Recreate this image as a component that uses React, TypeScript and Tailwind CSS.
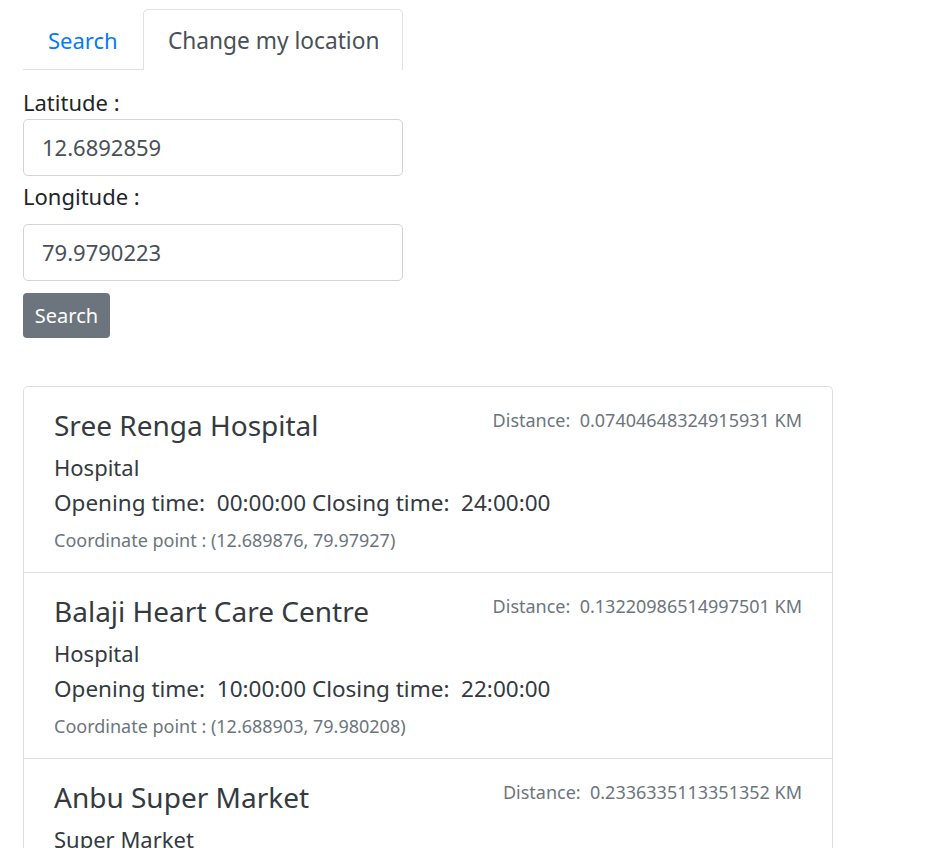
import React from "react";

const places = [
  {
    name: "Sree Renga Hospital",
    type: "Hospital",
    open: "00:00:00",
    close: "24:00:00",
    coord: "(12.689876, 79.97927)",
    dist: "0.07404648324915931",
  },
  {
    name: "Balaji Heart Care Centre",
    type: "Hospital",
    open: "10:00:00",
    close: "22:00:00",
    coord: "(12.688903, 79.980208)",
    dist: "0.13220986514997501",
  },
  {
    name: "Anbu Super Market",
    type: "Super Market",
    open: "08:00:00",
    close: "22:00:00",
    coord: "(12.687951, 79.980561)",
    dist: "0.2336335113351352",
  },
];

export default function App() {
  return (
    <div
      className="h-[848px] overflow-hidden bg-white pl-[23px] pt-[9px] text-[#212529]"
      style={{ fontFamily: '"Noto Sans", "Open Sans", sans-serif' }}
    >
      <div className="w-[380px]">
        <div className="flex h-[61px] items-stretch">
          <div className="flex w-[120px] items-center border-b border-[#dee2e6] pl-[25px] pt-[3px] text-[22px] text-[#007bff]">
            Search
          </div>
          <div className="flex flex-1 items-center rounded-t-[5px] border border-b-0 border-[#dee2e6] pl-[24px] pt-[3px] text-[22.7px] text-[#495057]">
            Change my location
          </div>
        </div>
        <div className="mt-[17px] flex h-[30px] items-center text-[22px] leading-[30px]">Latitude :</div>
        <div className="mt-[2px] flex h-[57px] items-center rounded-[5px] border border-[#ced4da] pl-[18px] text-[22px] text-[#495057]">
          12.6892859
        </div>
        <div className="mt-[5px] flex h-[30px] items-center text-[22px]">Longitude :</div>
        <div className="mt-[13px] flex h-[57px] items-center rounded-[5px] border border-[#ced4da] pl-[18px] text-[22px] text-[#495057]">
          79.9790223
        </div>
        <button className="mt-[12px] flex h-[45px] w-[87px] items-center justify-center rounded-[4px] bg-[#6c757d] text-[20px] text-white">
          Search
        </button>
      </div>
      <div className="mt-[48px] w-[810px] divide-y divide-[#dfdfdf] rounded-t-[5px] border border-b-0 border-[#dfdfdf]">
        {places.map((p) => (
          <div key={p.name} className="h-[186px] px-[30px] pt-[20px]">
            <div className="flex items-start justify-between">
              <div className="h-[36px] text-[28px] leading-[36px] text-[#343a40]">{p.name}</div>
              <div className="h-[27px] text-[18px] leading-[27px] text-[#6c757d] whitespace-pre">
                {"Distance:  " + p.dist + " KM"}
              </div>
            </div>
            <div className="mt-[6px] h-[36px] text-[22px] leading-[36px] text-[#343a40]">{p.type}</div>
            <div className="h-[36px] text-[22.5px] leading-[36px] text-[#343a40] whitespace-pre">
              {"Opening time:  " + p.open + " Closing time:  " + p.close}
            </div>
            <div className="mt-[4px] h-[30px] text-[18px] leading-[30px] text-[#6c757d]">
              Coordinate point : {p.coord}
            </div>
          </div>
        ))}
      </div>
    </div>
  );
}
